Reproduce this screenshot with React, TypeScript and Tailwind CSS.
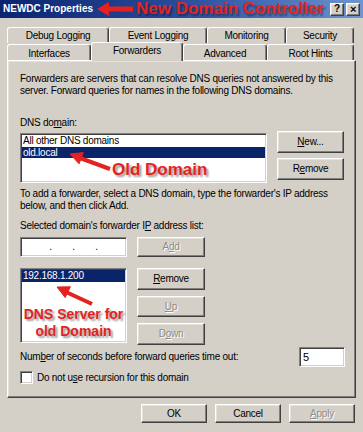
import React from "react";

const FACE = "bg-[#d4d0c8]";
const RAISED =
  "border border-t-white border-l-white border-r-[#404040] border-b-[#404040] shadow-[inset_-1px_-1px_0_#808080,inset_1px_1px_0_#e4e2dc]";
const SUNKEN =
  "border border-t-[#808080] border-l-[#808080] border-r-white border-b-white shadow-[inset_1px_1px_0_#404040,inset_-1px_-1px_0_#d4d0c8]";
const DISABLED = "text-[#8d8b86] [text-shadow:1px_1px_0_#ffffff]";
const NOTE =
  "font-bold tracking-normal text-[#e42320] [text-shadow:2px_2px_2px_rgba(0,0,0,0.4)] font-['Liberation_Sans',Arial,sans-serif]";

function Btn({
  children,
  className = "",
  disabled = false,
}: {
  children: React.ReactNode;
  className?: string;
  disabled?: boolean;
}) {
  return (
    <div
      className={`flex items-center justify-center ${FACE} ${RAISED} ${
        disabled ? DISABLED : "text-black"
      } ${className}`}
    >
      {children}
    </div>
  );
}

function U({ children }: { children: React.ReactNode }) {
  return <span className="underline underline-offset-1">{children}</span>;
}

function Tab({ label, className = "" }: { label: string; className?: string }) {
  return (
    <div
      className={`flex items-center justify-center rounded-t-[3px] border-t border-l border-r border-t-white border-l-white border-r-[#404040] shadow-[inset_-1px_0_0_#808080] ${FACE} ${className}`}
    >
      {label}
    </div>
  );
}

export default function App() {
  return (
    <div className="relative h-[432px] w-[363px] overflow-hidden bg-[#d4d0c8] font-['Liberation_Sans',Arial,sans-serif] text-[10px] leading-[12px] tracking-[-0.25px] text-black">
      {/* title bar */}
      <div className="flex h-[18px] items-center bg-gradient-to-r from-[#0a2470] via-[#2a4c9c] to-[#6f94d0]">
        <span className="ml-[3px] text-[10px] font-bold tracking-normal text-white">NEWDC Properties</span>
        <svg width="36" height="14" viewBox="0 0 36 14" className="ml-[4px]">
          <polygon points="0,7 12,0 12,4.5 36,4.5 36,9.5 12,9.5 12,14" fill="#e42320" />
        </svg>
        <span className={`ml-[3px] text-[17px] leading-[18px] ${NOTE}`}>New Domain Controller</span>
        <div className="ml-auto mr-[3px] flex gap-[2px]">
          <Btn className="h-[13px] w-[14px] text-[10px] font-bold">?</Btn>
          <Btn className="h-[13px] w-[14px] text-[11px] font-bold">×</Btn>
        </div>
      </div>

      {/* tabs */}
      <div className="mt-[9px] px-[7px]">
        <div className="flex h-[16px]">
          <Tab label="Debug Logging" className="w-[102px]" />
          <Tab label="Event Logging" className="w-[98px]" />
          <Tab label="Monitoring" className="w-[79px]" />
          <Tab label="Security" className="w-[68px]" />
        </div>
        <div className="flex h-[17px] items-end">
          <Tab label="Interfaces" className="h-[16px] w-[84px] pt-[2px]" />
          <Tab label="Forwarders" className="relative z-10 -mb-px h-[19px] w-[92px] pb-[3px]" />
          <Tab label="Advanced" className="h-[16px] w-[84px] pt-[2px]" />
          <Tab label="Root Hints" className="h-[16px] w-[87px] pt-[2px]" />
        </div>
      </div>

      {/* page */}
      <div className={`mx-[7px] h-[338px] pl-[12px] pr-[10px] ${RAISED}`}>
        <p className="mt-[12px]">
          Forwarders are servers that can resolve DNS queries not answered by this
          server. Forward queries for names in the following DNS domains.
        </p>
        <p className="mt-[20px]">
          DNS do<U>m</U>ain:
        </p>
        <div className="mt-[2px] flex gap-[10px]">
          <div className={`mt-[2px] h-[50px] w-[247px] bg-white ${SUNKEN} p-[1px]`}>
            <div className="h-[12px] px-[1px]">All other DNS domains</div>
            <div className="h-[11px] bg-[#0a246a] px-[1px] leading-[11px] text-white">old.local</div>
          </div>
          <div className="flex flex-col gap-[5px]">
            <Btn className="h-[22px] w-[67px]">
              <U>N</U>ew...
            </Btn>
            <Btn className="h-[22px] w-[67px]">
              R<U>e</U>move
            </Btn>
          </div>
        </div>
        <p className="mt-[5px]">
          To add a forwarder, select a DNS domain, type the forwarder's IP address
          below, and then click Add.
        </p>
        <p className="mt-[8px]">
          Selected domain's forwarder I<U>P</U> address list:
        </p>
        <div className="mt-[5px] flex gap-[10px]">
          <div className={`flex h-[20px] w-[107px] items-center justify-around bg-white px-[18px] ${SUNKEN}`}>
            <span>.</span>
            <span>.</span>
            <span>.</span>
          </div>
          <Btn disabled className="h-[20px] w-[68px]">
            A<U>d</U>d
          </Btn>
        </div>
        <div className="mt-[11px] flex gap-[10px]">
          <div className={`h-[75px] w-[107px] bg-white p-[1px] ${SUNKEN}`}>
            <div className="h-[12px] bg-[#0a246a] px-[1px] text-white">192.168.1.200</div>
          </div>
          <div className="flex flex-col gap-[6px]">
            <Btn className="h-[22px] w-[68px]">
              <U>R</U>emove
            </Btn>
            <Btn disabled className="h-[21px] w-[68px]">
              <U>U</U>p
            </Btn>
            <Btn disabled className="h-[22px] w-[68px]">
              D<U>o</U>wn
            </Btn>
          </div>
        </div>
        <div className="mt-[2px] flex h-[20px] items-center justify-between">
          <span>
            Num<U>b</U>er of seconds before forward queries time out:
          </span>
          <div className={`flex h-[20px] w-[46px] items-center bg-white px-[3px] text-[11px] ${SUNKEN}`}>5</div>
        </div>
        <div className="mt-[4px] flex items-center gap-[4px]">
          <div className={`h-[13px] w-[13px] bg-white ${SUNKEN}`} />
          <span>
            Do not u<U>s</U>e recursion for this domain
          </span>
        </div>
      </div>

      {/* dialog buttons */}
      <div className="mt-[6px] flex justify-end gap-[8px] pr-[8px]">
        <Btn className="h-[19px] w-[66px]">OK</Btn>
        <Btn className="h-[19px] w-[66px]">Cancel</Btn>
        <Btn disabled className="h-[19px] w-[66px]">
          <U>A</U>pply
        </Btn>
      </div>

      {/* annotations laid over the dialog */}
      <span className={`absolute left-[112px] top-[161px] text-[17px] leading-[18px] ${NOTE}`}>Old Domain</span>
      <div className={`absolute left-[20px] top-[306px] w-[107px] text-center text-[14px] leading-[17px] ${NOTE}`}>
        DNS Server for
        <br />
        old Domain
      </div>
      <svg className="pointer-events-none absolute left-0 top-0" width="363" height="432">
        <g fill="#e42320" stroke="#e42320">
          <line x1="110" y1="169" x2="80" y2="158" strokeWidth="4" />
          <polygon points="70,154 83.3,152.6 79.1,163.8" strokeWidth="1" />
          <line x1="92" y1="304" x2="66" y2="292" strokeWidth="4" />
          <polygon points="57,287 70.4,286.8 65.2,297.6" strokeWidth="1" />
        </g>
      </svg>
    </div>
  );
}
